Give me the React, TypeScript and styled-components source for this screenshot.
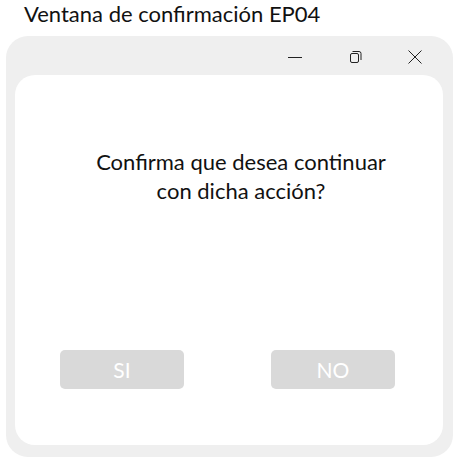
import React from "react";
import styled, { createGlobalStyle } from "styled-components";

const Global = createGlobalStyle`
  html, body { margin: 0; padding: 0; background: #ffffff; }
  body { font-family: Lato, "Liberation Sans", sans-serif; }
`;

const Page = styled.div`
  width: 457px;
  height: 465px;
  display: flex;
  flex-direction: column;
`;

const Title = styled.div`
  height: 36px;
  padding-left: 24px;
  font-size: 22px;
  line-height: 28px;
  color: #111;
  box-sizing: border-box;
`;

const Window = styled.div`
  margin-left: 6px;
  width: 447px;
  height: 421px;
  background: #efefef;
  border-radius: 22px;
  display: flex;
  flex-direction: column;
  box-sizing: border-box;
  padding: 0 10px 12px 9px;
`;

const TitleBar = styled.div`
  height: 39px;
  display: flex;
  justify-content: flex-end;
  align-items: center;
`;

const CtrlButton = styled.div`
  width: 60px;
  height: 20px;
  margin-top: 2px;
  padding-left: 4px;
  box-sizing: border-box;
  display: flex;
  align-items: center;
  justify-content: center;
  color: #222;
`;

const Panel = styled.div`
  flex: 1;
  background: #ffffff;
  border-radius: 20px;
  display: flex;
  flex-direction: column;
  align-items: center;
`;

const Message = styled.div`
  margin-top: 72px;
  padding-left: 24px;
  text-align: center;
  font-size: 22px;
  line-height: 29px;
  color: #111;
`;

const Actions = styled.div`
  margin-top: 145px;
  width: 100%;
  display: flex;
  justify-content: space-between;
  padding: 0 48px 0 45px;
  box-sizing: border-box;
`;

const ActionButton = styled.button`
  width: 124px;
  height: 39px;
  border: none;
  border-radius: 5px;
  background: #d9d9d9;
  color: #ffffff;
  font-family: Lato, "Liberation Sans", sans-serif;
  font-size: 21px;
  padding: 0;
  cursor: pointer;
`;

export default function App() {
  return (
    <>
      <Global />
      <Page>
        <Title>Ventana de confirmación EP04</Title>
        <Window>
          <TitleBar>
            <CtrlButton>
              <svg width="16" height="16" viewBox="0 0 16 16">
                <line x1="1" y1="8.5" x2="15" y2="8.5" stroke="#222" strokeWidth="1" />
              </svg>
            </CtrlButton>
            <CtrlButton>
              <svg width="16" height="16" viewBox="0 0 16 16">
                <rect x="3.5" y="4.5" width="8" height="9" rx="1.5" fill="none" stroke="#222" strokeWidth="1" />
                <path d="M5.5 2.5 H12 a2 2 0 0 1 2 2 V11" fill="none" stroke="#222" strokeWidth="1" />
              </svg>
            </CtrlButton>
            <CtrlButton>
              <svg width="16" height="16" viewBox="0 0 16 16">
                <path d="M1.5 1.5 L14.5 14.5 M14.5 1.5 L1.5 14.5" stroke="#222" strokeWidth="1" />
              </svg>
            </CtrlButton>
          </TitleBar>
          <Panel>
            <Message>
              Confirma que desea continuar
              <br />
              con dicha acción?
            </Message>
            <Actions>
              <ActionButton>SI</ActionButton>
              <ActionButton>NO</ActionButton>
            </Actions>
          </Panel>
        </Window>
      </Page>
    </>
  );
}
